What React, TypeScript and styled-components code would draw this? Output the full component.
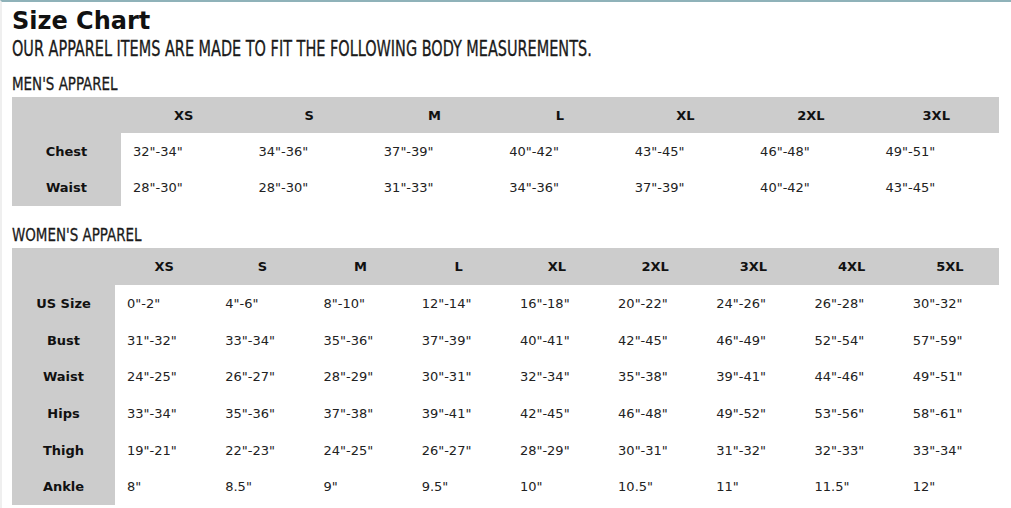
import styled, { createGlobalStyle } from 'styled-components'

const GlobalStyle = createGlobalStyle`
    html, body {
        margin: 0;
        padding: 0;
        background: #ffffff;
    }
`

const Page = styled.main`
    width: 1011px;
    height: 508px;
    box-sizing: border-box;
    border-top: 2px solid #8fb2b9;
    border-left: 2px solid #efefef;
    padding: 0 12px 0 10px;
    overflow: hidden;
    color: #111111;
`

const Title = styled.h1`
    margin: 5px 0 0;
    font-family: 'DejaVu Sans', Verdana, sans-serif;
    font-size: 24px;
    line-height: 28px;
    font-weight: 700;
    color: #111111;
`

const Condensed = styled.span<{ $scale: number }>`
    display: inline-block;
    font-family: 'DejaVu Sans Condensed', 'DejaVu Sans', sans-serif;
    font-stretch: condensed;
    white-space: nowrap;
    transform: scaleX(${p => p.$scale});
    transform-origin: left center;
`

const Subtitle = styled.p`
    margin: 2px 0 0;
    font-size: 22px;
    line-height: 24px;
    color: #1a1a1a;
    -webkit-text-stroke: 0.3px #1a1a1a;
`

const SectionTitle = styled.h2<{ $top: number }>`
    margin: ${p => p.$top}px 0 3px;
    font-size: 18px;
    line-height: 20px;
    font-weight: 400;
    color: #1a1a1a;
    -webkit-text-stroke: 0.3px #1a1a1a;
`

const Table = styled.table`
    width: 987px;
    border-collapse: collapse;
    table-layout: fixed;
    font-family: 'DejaVu Sans', Verdana, sans-serif;
    font-size: 13px;
    color: #222222;
`

const HeadCell = styled.th<{ $height: number }>`
    height: ${p => p.$height}px;
    padding: 0;
    background: #cccccc;
    font-weight: 700;
    text-align: center;
    color: #111111;
`

const LabelCell = styled.th<{ $height: number }>`
    height: ${p => p.$height}px;
    padding: 0;
    background: #cccccc;
    font-weight: 700;
    text-align: center;
    color: #111111;
`

const ValueCell = styled.td`
    padding: 0 0 0 12px;
    text-align: left;
`

type Chart = {
    sizes: string[]
    rows: [string, string[]][]
}

const men: Chart = {
    sizes: ['XS', 'S', 'M', 'L', 'XL', '2XL', '3XL'],
    rows: [
        ['Chest', ['32"-34"', '34"-36"', '37"-39"', '40"-42"', '43"-45"', '46"-48"', '49"-51"']],
        ['Waist', ['28"-30"', '28"-30"', '31"-33"', '34"-36"', '37"-39"', '40"-42"', '43"-45"']],
    ],
}

const women: Chart = {
    sizes: ['XS', 'S', 'M', 'L', 'XL', '2XL', '3XL', '4XL', '5XL'],
    rows: [
        ['US Size', ['0"-2"', '4"-6"', '8"-10"', '12"-14"', '16"-18"', '20"-22"', '24"-26"', '26"-28"', '30"-32"']],
        ['Bust', ['31"-32"', '33"-34"', '35"-36"', '37"-39"', '40"-41"', '42"-45"', '46"-49"', '52"-54"', '57"-59"']],
        ['Waist', ['24"-25"', '26"-27"', '28"-29"', '30"-31"', '32"-34"', '35"-38"', '39"-41"', '44"-46"', '49"-51"']],
        ['Hips', ['33"-34"', '35"-36"', '37"-38"', '39"-41"', '42"-45"', '46"-48"', '49"-52"', '53"-56"', '58"-61"']],
        ['Thigh', ['19"-21"', '22"-23"', '24"-25"', '26"-27"', '28"-29"', '30"-31"', '31"-32"', '32"-33"', '33"-34"']],
        ['Ankle', ['8"', '8.5"', '9"', '9.5"', '10"', '10.5"', '11"', '11.5"', '12"']],
    ],
}

function SizeTable({ chart, labelWidth, headHeight, rowHeight }: {
    chart: Chart
    labelWidth: number
    headHeight: number
    rowHeight: number
}) {
    return <Table>
        <colgroup>
            <col style={{ width: labelWidth }} />
            {chart.sizes.map(s => <col key={s} />)}
        </colgroup>
        <thead>
            <tr>
                <HeadCell $height={headHeight} />
                {chart.sizes.map(s => <HeadCell key={s} $height={headHeight}>{s}</HeadCell>)}
            </tr>
        </thead>
        <tbody>
            {chart.rows.map(([label, values]) => <tr key={label}>
                <LabelCell $height={rowHeight}>{label}</LabelCell>
                {values.map((v, i) => <ValueCell key={i}>{v}</ValueCell>)}
            </tr>)}
        </tbody>
    </Table>
}

export default function App() {
    return <>
        <GlobalStyle />
        <Page>
            <Title>Size Chart</Title>
            <Subtitle>
                <Condensed $scale={0.73}>OUR APPAREL ITEMS ARE MADE TO FIT THE FOLLOWING BODY MEASUREMENTS.</Condensed>
            </Subtitle>
            <SectionTitle $top={13}>
                <Condensed $scale={0.83}>MEN'S APPAREL</Condensed>
            </SectionTitle>
            <SizeTable chart={men} labelWidth={109} headHeight={36} rowHeight={36.5} />
            <SectionTitle $top={19}>
                <Condensed $scale={0.83}>WOMEN'S APPAREL</Condensed>
            </SectionTitle>
            <SizeTable chart={women} labelWidth={103} headHeight={37} rowHeight={36.7} />
        </Page>
    </>
}
